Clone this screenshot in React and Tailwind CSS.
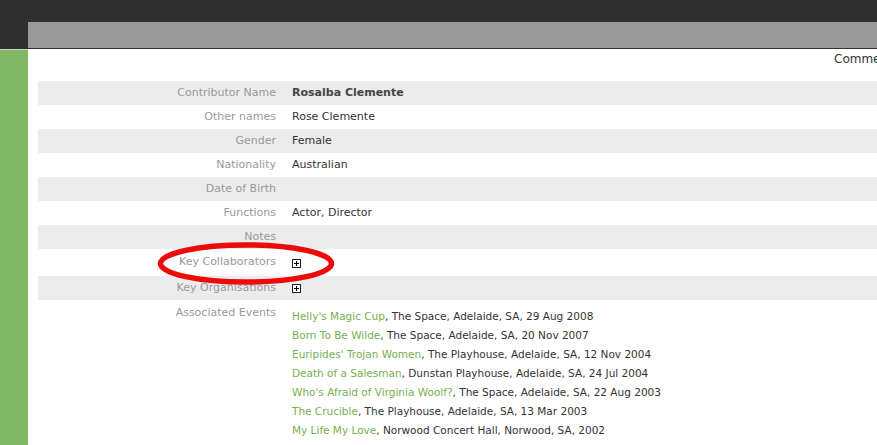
import React from "react";

const rows = [
  { label: "Contributor Name", value: "Rosalba Clemente", bold: true, gray: true },
  { label: "Other names", value: "Rose Clemente" },
  { label: "Gender", value: "Female", gray: true },
  { label: "Nationality", value: "Australian" },
  { label: "Date of Birth", value: "", gray: true },
  { label: "Functions", value: "Actor, Director" },
  { label: "Notes", value: "", gray: true },
];

const events = [
  ["Helly's Magic Cup", "The Space, Adelaide, SA, 29 Aug 2008"],
  ["Born To Be Wilde", "The Space, Adelaide, SA, 20 Nov 2007"],
  ["Euripides' Trojan Women", "The Playhouse, Adelaide, SA, 12 Nov 2004"],
  ["Death of a Salesman", "Dunstan Playhouse, Adelaide, SA, 24 Jul 2004"],
  ["Who's Afraid of Virginia Woolf?", "The Space, Adelaide, SA, 22 Aug 2003"],
  ["The Crucible", "The Playhouse, Adelaide, SA, 13 Mar 2003"],
  ["My Life My Love", "Norwood Concert Hall, Norwood, SA, 2002"],
  ["Ugly Duck", "The Playhouse, Adelaide, SA, 15 Aug 2001"],
];

function Plus() {
  return (
    <svg width="9" height="9" viewBox="0 0 9 9" className="block">
      <rect x="0.5" y="0.5" width="8" height="8" fill="white" stroke="#222" strokeWidth="1" />
      <path d="M2 4.5H7M4.5 2V7" stroke="#000" strokeWidth="1" />
    </svg>
  );
}

function Label({ children }) {
  return (
    <div className="w-[254px] shrink-0 pr-[16px] text-right text-[#999999]">{children}</div>
  );
}

export default function App() {
  return (
    <div
      className="relative w-[877px] h-[445px] overflow-hidden bg-white text-[11px] text-[#333333]"
      style={{ fontFamily: '"DejaVu Sans", Verdana, sans-serif' }}
    >
      <div className="h-[22px] bg-[#2f2f2f]" />
      <div className="flex h-[27px] bg-[#2f2f2f]">
        <div className="w-[28px] shrink-0" />
        <div className="flex-1 bg-[#9a9a9a] border-b border-[#333333]" />
      </div>
      <div className="flex h-[396px]">
        <div className="w-[28px] shrink-0 bg-[#82b865] border-t border-[#cfcfcf]" />
        <div className="flex-1 pl-[10px] min-w-0">
          <div className="w-[1100px]">
            <div className="h-[32px] pl-[796px] pt-[1px] text-[12px] text-[#333333] whitespace-nowrap">
              <span className="leading-[14px]">Comments</span>
            </div>
            {rows.map((r) => (
              <div
                key={r.label}
                className={`flex items-center h-[24px] ${r.gray ? "bg-[#ececec]" : "bg-white"}`}
              >
                <Label>{r.label}</Label>
                <div className={r.bold ? "font-bold text-[#444444]" : ""}>{r.value}</div>
              </div>
            ))}
            <div className="flex items-center h-[27px] bg-white">
              <Label>Key Collaborators</Label>
              <div className="pt-[1px]"><Plus /></div>
            </div>
            <div className="flex items-center h-[24px] bg-[#ececec]">
              <Label>Key Organisations</Label>
              <div className="pt-[1px]"><Plus /></div>
            </div>
            <div className="flex items-start pt-[5px]">
              <Label>Associated Events</Label>
              <div className="flex flex-col leading-[19px] pt-[2px] text-[10.5px]">
                {events.map(([t, rest]) => (
                  <div key={t} className="whitespace-nowrap">
                    <span className="text-[#76b04f]">{t}</span>, {rest}
                  </div>
                ))}
              </div>
            </div>
          </div>
        </div>
      </div>
      <svg className="absolute left-[155px] top-[240px]" width="184" height="48" viewBox="0 0 184 48">
        <ellipse cx="91" cy="23.5" rx="85.5" ry="18.5" fill="none" stroke="#ec0a0a" strokeWidth="5.5" />
      </svg>
    </div>
  );
}
